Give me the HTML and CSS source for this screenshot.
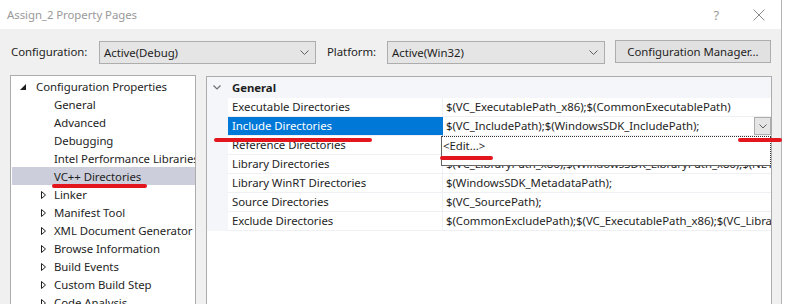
FILE: index.html
```html
<!DOCTYPE html>
<html lang="en">
<head>
    <meta charset="UTF-8">
    <meta name="viewport" content="width=device-width, initial-scale=1.0">
    <title>Assign_2 Property Pages</title>
    <link rel="stylesheet" href="styles.css">
</head>
<body>

<div class="window">
    <div class="titlebar">
        <span class="title">Assign_2 Property Pages</span>
        <span class="help">?</span>
        <svg class="close" width="12" height="12" viewBox="0 0 12 12">
            <path d="M0.5 0.5 L11.5 11.5 M11.5 0.5 L0.5 11.5" stroke="#8a8a8a" stroke-width="1" fill="none"/>
        </svg>
    </div>

    <div class="dialog">
        <div class="toolbar">
            <span class="label label-config">Configuration:</span>
            <div class="combo combo-config">
                <span>Active(Debug)</span>
                <svg width="9" height="5" viewBox="0 0 9 5"><polyline points="0.5,0.5 4.5,4.5 8.5,0.5" stroke="#606060" fill="none"/></svg>
            </div>
            <span class="label label-platform">Platform:</span>
            <div class="combo combo-platform">
                <span>Active(Win32)</span>
                <svg width="9" height="5" viewBox="0 0 9 5"><polyline points="0.5,0.5 4.5,4.5 8.5,0.5" stroke="#606060" fill="none"/></svg>
            </div>
            <button class="btn">Configuration Manager...</button>
        </div>

        <div class="panes">
            <!-- property page tree -->
            <div class="tree">
                <div class="node">
                    <svg class="exp-open" width="6" height="6" viewBox="0 0 6 6"><path d="M0 6 L6 0 L6 6 Z" fill="#1e1e1e"/></svg>
                    <span>Configuration Properties</span>
                </div>
                <div class="node child"><span>General</span></div>
                <div class="node child"><span>Advanced</span></div>
                <div class="node child"><span>Debugging</span></div>
                <div class="node child"><span>Intel Performance Libraries</span></div>
                <div class="node child selected"><span>VC++ Directories</span></div>
                <div class="node child closed"><svg class="exp" width="5" height="8" viewBox="0 0 5 8"><path d="M0.5 0.5 L4.5 4 L0.5 7.5 Z" stroke="#1e1e1e" fill="none"/></svg><span>Linker</span></div>
                <div class="node child closed"><svg class="exp" width="5" height="8" viewBox="0 0 5 8"><path d="M0.5 0.5 L4.5 4 L0.5 7.5 Z" stroke="#1e1e1e" fill="none"/></svg><span>Manifest Tool</span></div>
                <div class="node child closed"><svg class="exp" width="5" height="8" viewBox="0 0 5 8"><path d="M0.5 0.5 L4.5 4 L0.5 7.5 Z" stroke="#1e1e1e" fill="none"/></svg><span>XML Document Generator</span></div>
                <div class="node child closed"><svg class="exp" width="5" height="8" viewBox="0 0 5 8"><path d="M0.5 0.5 L4.5 4 L0.5 7.5 Z" stroke="#1e1e1e" fill="none"/></svg><span>Browse Information</span></div>
                <div class="node child closed"><svg class="exp" width="5" height="8" viewBox="0 0 5 8"><path d="M0.5 0.5 L4.5 4 L0.5 7.5 Z" stroke="#1e1e1e" fill="none"/></svg><span>Build Events</span></div>
                <div class="node child closed"><svg class="exp" width="5" height="8" viewBox="0 0 5 8"><path d="M0.5 0.5 L4.5 4 L0.5 7.5 Z" stroke="#1e1e1e" fill="none"/></svg><span>Custom Build Step</span></div>
                <div class="node child closed"><svg class="exp" width="5" height="8" viewBox="0 0 5 8"><path d="M0.5 0.5 L4.5 4 L0.5 7.5 Z" stroke="#1e1e1e" fill="none"/></svg><span>Code Analysis</span></div>
            </div>

            <!-- property grid -->
            <div class="grid">
                <div class="cat">
                    <svg class="cat-toggle" width="8" height="5" viewBox="0 0 8 5"><polyline points="0.5,0.5 4,4 7.5,0.5" stroke="#707070" stroke-width="1.2" fill="none"/></svg>
                    <b>General</b>
                </div>
                <div class="prop">
                    <span class="gut"></span>
                    <span class="name">Executable Directories</span>
                    <span class="value">$(VC_ExecutablePath_x86);$(CommonExecutablePath)</span>
                </div>
                <div class="prop active">
                    <span class="gut"></span>
                    <span class="name">Include Directories</span>
                    <span class="value">
                        <span class="value-text">$(VC_IncludePath);$(WindowsSDK_IncludePath);</span>
                        <span class="drop-btn">
                            <svg width="8" height="5" viewBox="0 0 8 5"><polyline points="0.5,0.5 4,4 7.5,0.5" stroke="#606060" fill="none"/></svg>
                        </span>
                    </span>
                </div>
                <div class="prop">
                    <span class="gut"></span>
                    <span class="name">Reference Directories</span>
                    <span class="value">$(VC_ReferencesPath_x86);</span>
                </div>
                <div class="prop">
                    <span class="gut"></span>
                    <span class="name">Library Directories</span>
                    <span class="value">$(VC_LibraryPath_x86);$(WindowsSDK_LibraryPath_x86);$(NETFXKitsDir)Lib\um\x86</span>
                </div>
                <div class="prop">
                    <span class="gut"></span>
                    <span class="name">Library WinRT Directories</span>
                    <span class="value">$(WindowsSDK_MetadataPath);</span>
                </div>
                <div class="prop">
                    <span class="gut"></span>
                    <span class="name">Source Directories</span>
                    <span class="value">$(VC_SourcePath);</span>
                </div>
                <div class="prop">
                    <span class="gut"></span>
                    <span class="name">Exclude Directories</span>
                    <span class="value">$(CommonExcludePath);$(VC_ExecutablePath_x86);$(VC_LibraryPath_x86)</span>
                </div>

                <div class="dropdown">
                    <div class="dropdown-item">&lt;Edit...&gt;</div>
                </div>
            </div>
        </div>
    </div>
</div>

<!-- red pen marks drawn over the screenshot -->
<span class="mark mark-vc"></span>
<span class="mark mark-include"></span>
<span class="mark mark-edit"></span>
<span class="mark mark-btn"></span>

</body>
</html>
```

FILE: styles.css
```css
body {
    position: relative;
    margin: 0;
    width: 785px;
    height: 304px;
    overflow: hidden;
    background-color: #fff;
    font-family: "Noto Sans", Arial, sans-serif;
    font-size: 11.4px;
    letter-spacing: -0.05px;
    color: #1e1e1e;
}

svg {
    flex-shrink: 0;
}

.window {
    width: 781px;
    height: 304px;
    border-right: 1px solid #b4b4b4;
    overflow: hidden;
}

.titlebar {
    height: 29px;
    display: flex;
    align-items: center;
    background-color: #fff;
}

.title {
    padding-left: 7px;
    color: #999;
}

.help {
    margin-left: auto;
    color: #999;
    font-size: 13px;
}

.close {
    margin-left: 34px;
    margin-right: 16px;
}

.dialog {
    height: 275px;
    background-color: #f0f0f0;
}

.toolbar {
    display: flex;
    align-items: flex-start;
    box-sizing: border-box;
    height: 35px;
    padding: 11px 0 0 11px;
}

.label {
    margin-top: 1px;
    line-height: 22px;
}

.label-config {
    width: 88px;
}

.label-platform {
    width: 60px;
}

.combo {
    display: flex;
    align-items: center;
    box-sizing: border-box;
    height: 23px;
    margin-top: 1px;
    padding: 0 6px 0 4px;
    border: 1px solid #adadad;
    background-color: #e5e5e5;
}

.combo span {
    flex: 1;
}

.combo-config {
    width: 217px;
    margin-right: 11px;
}

.combo-platform {
    width: 218px;
    margin-right: 10px;
}

.btn {
    box-sizing: border-box;
    width: 156px;
    height: 23px;
    padding: 0;
    border: 1px solid #adadad;
    background-color: #e1e1e1;
    font: inherit;
    letter-spacing: inherit;
    color: inherit;
}

.panes {
    display: flex;
    align-items: flex-start;
    margin-top: 11px;
    padding-left: 10px;
}

/* tree */
.tree {
    box-sizing: border-box;
    width: 186px;
    height: 240px;
    padding-top: 1px;
    border: 1px solid #acacac;
    background-color: #fff;
    overflow: hidden;
}

.node {
    display: flex;
    align-items: center;
    height: 18px;
    padding-left: 25px;
    white-space: nowrap;
}

.node:first-child {
    padding-left: 9px;
}

.exp-open {
    margin-right: 10px;
    margin-top: 1px;
}

.node.child {
    padding-left: 43px;
}

.node.closed {
    padding-left: 30px;
}

.exp {
    margin-right: 8px;
    margin-top: 1px;
}

.node.selected {
    margin-left: 1px;
    padding-left: 42px;
    background-color: #cccedb;
}

/* property grid */
.grid {
    position: relative;
    box-sizing: border-box;
    width: 566px;
    height: 240px;
    margin-top: 1px;
    margin-left: 10px;
    border: 1px solid #acacac;
    background-color: #fff;
    overflow: hidden;
}

.cat {
    display: flex;
    align-items: center;
    height: 21px;
    padding-left: 6px;
    background-color: #f4f6fa;
}

.cat-toggle {
    margin-right: 11px;
}

.prop {
    display: grid;
    grid-template-columns: 21px 215px 1fr;
    height: 19px;
}

.prop span {
    box-sizing: border-box;
}

.gut {
    background-color: #f4f6fa;
}

.name,
.value {
    line-height: 18px;
    border-bottom: 1px solid #eef0f4;
    white-space: nowrap;
    overflow: hidden;
}

.name {
    padding-left: 4px;
    border-right: 1px solid #eef0f4;
}

.value {
    padding-left: 3px;
}

.prop.active .name {
    background-color: #0078d7;
    border-right-color: #0078d7;
    color: #fff;
}

.prop.active .value {
    display: flex;
    padding-right: 0;
}

.value-text {
    flex: 1;
    overflow: hidden;
}

.drop-btn {
    display: flex;
    align-items: center;
    justify-content: center;
    width: 17px;
    height: 18px;
    border: 1px solid #adadad;
    background-color: #e5e5e5;
}

.dropdown {
    position: absolute;
    left: 234px;
    top: 59px;
    box-sizing: border-box;
    width: 330px;
    height: 30px;
    border-left: 1px solid #646464;
    border-bottom: 1px solid #646464;
    border-top: 1px dotted #333;
    border-right: 1px dotted #333;
    background-color: #fff;
}

.dropdown-item {
    padding-left: 1px;
    line-height: 18px;
}

/* red annotation strokes */
.mark {
    position: absolute;
    height: 4px;
    border-radius: 2px;
    background-color: #e3161e;
}

.mark-vc {
    left: 52px;
    top: 184px;
    width: 95px;
}

.mark-include {
    left: 214px;
    top: 138px;
    width: 158px;
}

.mark-edit {
    left: 440px;
    top: 156px;
    width: 53px;
}

.mark-btn {
    left: 738px;
    top: 138px;
    width: 44px;
}
```
